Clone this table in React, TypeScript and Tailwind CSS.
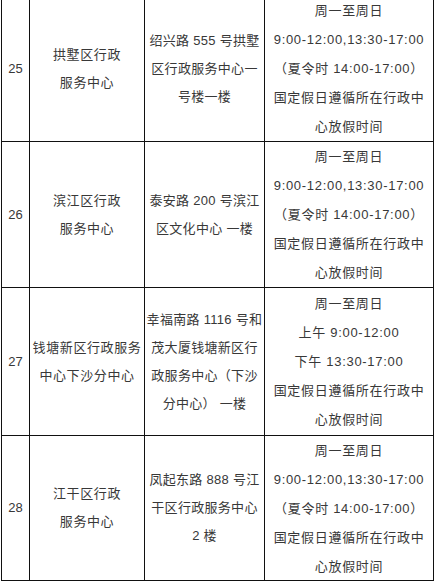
import React from 'react';

type Row = {
  no: string;
  name: string[];
  address: string[];
  hours: string[];
  height: string;
};

const ROWS: Row[] = [
  {
    no: '25',
    name: ['拱墅区行政', '服务中心'],
    address: ['绍兴路 555 号拱墅', '区行政服务中心一', '号楼一楼'],
    hours: ['周一至周日', '9:00-12:00,13:30-17:00', '（夏令时 14:00-17:00）', '国定假日遵循所在行政中', '心放假时间'],
    height: 'h-[146px]',
  },
  {
    no: '26',
    name: ['滨江区行政', '服务中心'],
    address: ['泰安路 200 号滨江', '区文化中心 一楼'],
    hours: ['周一至周日', '9:00-12:00,13:30-17:00', '（夏令时 14:00-17:00）', '国定假日遵循所在行政中', '心放假时间'],
    height: 'h-[146px]',
  },
  {
    no: '27',
    name: ['钱塘新区行政服务', '中心下沙分中心'],
    address: ['幸福南路 1116 号和', '茂大厦钱塘新区行', '政服务中心（下沙', '分中心） 一楼'],
    hours: ['周一至周日', '上午 9:00-12:00', '下午 13:30-17:00', '国定假日遵循所在行政中', '心放假时间'],
    height: 'h-[148px]',
  },
  {
    no: '28',
    name: ['江干区行政', '服务中心'],
    address: ['凤起东路 888 号江', '干区行政服务中心', '2 楼'],
    hours: ['周一至周日', '9:00-12:00,13:30-17:00', '（夏令时 14:00-17:00）', '国定假日遵循所在行政中', '心放假时间'],
    height: 'h-[145px]',
  },
];

function Lines({ lines }: { lines: string[] }) {
  return (
    <div className="flex flex-col items-center">
      {lines.map((line, i) => (
        <div key={i} className="whitespace-nowrap">
          {line}
        </div>
      ))}
    </div>
  );
}

export default function App() {
  return (
    <div className="h-[586px] w-[437px] overflow-hidden bg-white">
      <div
        className="ml-px -mt-[5px] flex w-[433px] flex-col border-l border-t border-[#111] text-[13px] text-[#383838]"
        style={{ fontFamily: '"Liberation Sans", "Noto Sans CJK SC", sans-serif' }}
      >
        {ROWS.map((row) => (
          <div key={row.no} className={`flex ${row.height}`}>
            <div className="flex w-[28px] shrink-0 items-center justify-center border-b border-r border-[#111] text-[13px]">
              {row.no}
            </div>
            <div className="flex w-[115px] shrink-0 items-center justify-center border-b border-r border-[#111] leading-[28px] tracking-[0.6px]">
              <Lines lines={row.name} />
            </div>
            <div className="flex w-[120px] shrink-0 items-center justify-center border-b border-r border-[#111] leading-[28px] tracking-[0.3px]">
              <Lines lines={row.address} />
            </div>
            <div className="flex w-[169px] shrink-0 items-center justify-center border-b border-r border-[#111] leading-[29px] tracking-[0.7px]">
              <Lines lines={row.hours} />
            </div>
          </div>
        ))}
      </div>
    </div>
  );
}
